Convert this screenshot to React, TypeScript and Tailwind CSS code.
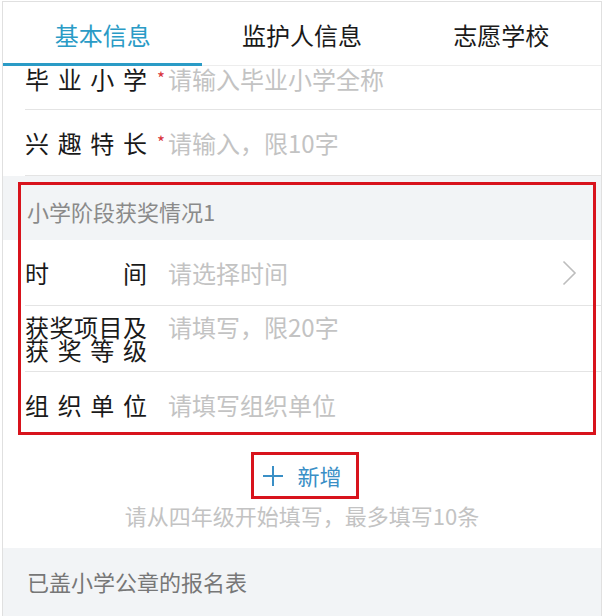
import React from 'react';

interface RowProps {
  label: React.ReactNode;
  placeholder: string;
  required?: boolean;
  arrow?: boolean;
  last?: boolean;
  // row layout: centred single line, top-aligned two-line label, or the half-scrolled first row
  variant?: 'center' | 'multi' | 'scrolled';
}

const Row: React.FC<RowProps> = ({ label, placeholder, required, arrow, last, variant = 'center' }) => {
  const layout =
    variant === 'multi'
      ? 'h-[66px] items-start pt-[9px]'
      : variant === 'scrolled'
      ? 'h-[44px] items-start pt-[1px]'
      : 'h-[66px] items-center';

  return (
    <div className={`ml-[22px] flex ${layout} ${last ? '' : 'border-b border-[#e4e4e4]'}`}>
      {/* Label */}
      <div className="w-[122px] shrink-0 text-[24px] leading-[24px] text-[#1a1a1a] [text-align-last:justify]">
        {label}
      </div>
      <div className="w-[22px] shrink-0 pl-[10px] text-[17px] leading-[24px] text-[#d8333a]">
        {required ? <span className="block -translate-y-[1px]">*</span> : null}
      </div>
      <div className="flex-1 text-[24px] leading-[24px] text-[#c3c3c3] -ml-[1px]">{placeholder}</div>
      {arrow && (
        <svg width="15" height="26" viewBox="0 0 15 26" className="mr-[24px] shrink-0">
          <path d="M1.5 1.5 L13 13 L1.5 24.5" fill="none" stroke="#bdbdbd" strokeWidth="1.6" />
        </svg>
      )}
    </div>
  );
};

const tabs = ['基本信息', '监护人信息', '志愿学校'];

export default function App() {
  return (
    <div className="w-[604px] h-[616px] bg-white overflow-hidden font-['Noto_Sans_CJK_SC','Microsoft_YaHei',sans-serif]">
      <div className="ml-[2px] mt-[1px] w-[600px] h-[615px] border-x border-t border-[#e0e0e0] overflow-hidden">
        {/* Tabs */}
        <div className="flex h-[64px] border-b border-[#ededed]">
          {tabs.map((t, i) => (
            <div
              key={t}
              className={`relative flex-1 flex items-center justify-center pt-[2px] text-[24px] ${
                i === 0 ? 'text-[#2a9bc6]' : 'text-[#1a1a1a]'
              }`}
            >
              {t}
              {i === 0 && <span className="absolute left-0 right-0 bottom-[-1px] h-[3px] bg-[#2a9bc6]" />}
            </div>
          ))}
        </div>

        {/* Content (already scrolled a little) */}
        <Row variant="scrolled" label="毕业小学" placeholder="请输入毕业小学全称" required />
        <Row label="兴趣特长" placeholder="请输入，限10字" required />

        {/* Award section */}
        <div className="relative">
          <div className="h-[64px] bg-[#f2f4f6] pl-[24px] pt-[23px] text-[22px] leading-[24px] text-[#8a8a8a]">
            小学阶段获奖情况1
          </div>
          <Row label="时间" placeholder="请选择时间" arrow />
          <Row
            variant="multi"
            label={
              <div className="leading-[23px]">
                获奖项目及
                <br />
                获奖等级
              </div>
            }
            placeholder="请填写，限20字"
          />
          <Row label="组织单位" placeholder="请填写组织单位" last />
          {/* annotation frame */}
          <div className="absolute left-[15px] right-[5px] top-[6px] bottom-[3px] border-[3px] border-[#d8131c] pointer-events-none" />
        </div>

        {/* Add button */}
        <div className="h-[110px] flex flex-col items-center pt-[14px]">
          <div className="border-[3px] border-[#d8131c] h-[47px] pl-[9px] pr-[14px] flex items-center ml-[6px]">
            <button className="flex items-center gap-[14px] text-[22px] text-[#3a8fc6]">
              <svg width="20" height="20" viewBox="0 0 20 20">
                <path d="M10 0 V20 M0 10 H20" stroke="#3a8fc6" strokeWidth="2" />
              </svg>
              新增
            </button>
          </div>
          <div className="mt-[3px] text-[22px] leading-[26px] text-[#c3c3c3]">请从四年级开始填写，最多填写10条</div>
        </div>

        {/* Stamped form */}
        <div className="h-[70px] bg-[#f2f4f6] pl-[24px] pt-[21px] text-[22px] leading-[24px] text-[#777777]">
          已盖小学公章的报名表
        </div>
      </div>
    </div>
  );
}
